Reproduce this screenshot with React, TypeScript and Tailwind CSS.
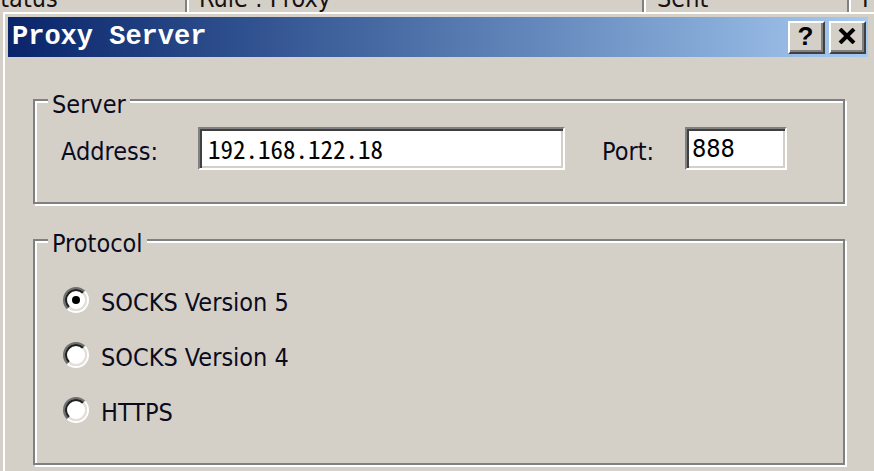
export default function App() {
  const ui = "font-['DejaVu_Sans_Condensed','DejaVu_Sans',sans-serif]";
  const radios = [
    { label: "SOCKS Version 5", checked: true },
    { label: "SOCKS Version 4", checked: false },
    { label: "HTTPS", checked: false },
  ];
  return (
    <div className={`w-[874px] h-[471px] overflow-hidden bg-[#d4d0c8] flex flex-col ${ui} text-[25px] leading-[25px] text-[#0b0b1e]`}>
      {/* background list header (cut off) */}
      <div className="h-[12px] flex shrink-0 overflow-hidden text-[#1a1010]">
        <div className="w-[187px] border-r-2 border-[#808080] overflow-hidden">
          <div className="-mt-[14px] -ml-[14px] whitespace-nowrap">Status</div>
        </div>
        <div className="w-[457px] border-l-2 border-white border-r-2 border-r-[#808080] pl-[10px] overflow-hidden">
          <div className="-mt-[14px] whitespace-nowrap">Rule : Proxy</div>
        </div>
        <div className="w-[205px] border-l-2 border-white border-r-2 border-r-[#808080] pl-[11px] overflow-hidden">
          <div className="-mt-[14px] whitespace-nowrap">Sent</div>
        </div>
        <div className="flex-1 border-l-2 border-white pl-[11px] overflow-hidden">
          <div className="-mt-[14px] whitespace-nowrap">P</div>
        </div>
      </div>

      {/* dialog */}
      <div className="flex-1 ml-[3px] border-t-2 border-l-2 border-white pt-[3px] pl-[3px] flex flex-col">
        <div className="h-[40px] shrink-0 mr-[6px] bg-linear-to-r from-[#0a246a] to-[#a6caf0] flex items-center justify-between pl-[4px] pr-[2px]">
          <span className="font-['Liberation_Mono',monospace] font-bold text-[27px] leading-none text-white">Proxy Server</span>
          <div className="flex gap-[4px]">
            <div className="w-[37px] h-[33px] bg-[#d4d0c8] border-2 border-t-white border-l-white border-b-[#404040] border-r-[#404040] shadow-[inset_-2px_-2px_0_#808080] flex items-center justify-center">
              <span className="font-['Liberation_Sans',sans-serif] font-bold text-[26px] leading-none text-black -mt-[2px] -ml-[2px]">?</span>
            </div>
            <div className="w-[37px] h-[33px] bg-[#d4d0c8] border-2 border-t-white border-l-white border-b-[#404040] border-r-[#404040] shadow-[inset_-2px_-2px_0_#808080] flex items-center justify-center">
              <svg width="18" height="16" viewBox="0 0 18 16" className="-mt-[2px] -ml-[2px]">
                <path d="M2 1 L16 15 M16 1 L2 15" stroke="#000" strokeWidth="4" />
              </svg>
            </div>
          </div>
        </div>

        {/* Server group */}
        <div className="relative mt-[42px] ml-[25px] w-[812px] h-[105px] shrink-0 border-2 border-[#808080] shadow-[inset_2px_2px_0_#fff,2px_2px_0_#fff] pt-[26px] pl-[26px] flex items-start">
          <span className="absolute left-[13px] -top-[9px] px-[4px] bg-[#d4d0c8]">Server</span>
          <span className="w-[137px] mt-[12px]">Address:</span>
          <div className="w-[367px] h-[43px] bg-white border-2 border-t-[#808080] border-l-[#808080] border-b-white border-r-white shadow-[inset_2px_2px_0_#404040,inset_-2px_-2px_0_#d4d0c8] flex items-center pl-[8px]">
            <span className="font-['Noto_Sans_Mono_CJK_SC','Liberation_Mono',monospace] text-[25px] text-black">192.168.122.18</span>
          </div>
          <span className="w-[83px] ml-[37px] mt-[12px]">Port:</span>
          <div className="w-[102px] h-[43px] bg-white border-2 border-t-[#808080] border-l-[#808080] border-b-white border-r-white shadow-[inset_2px_2px_0_#404040,inset_-2px_-2px_0_#d4d0c8] flex items-center pl-[5px]">
            <span className="text-black">888</span>
          </div>
        </div>

        {/* Protocol group */}
        <div className="relative mt-[35px] ml-[25px] w-[812px] h-[226px] shrink-0 border-2 border-[#808080] shadow-[inset_2px_2px_0_#fff,2px_2px_0_#fff] pt-[46px] pl-[28px] flex flex-col gap-[29px]">
          <span className="absolute left-[13px] -top-[10px] px-[4px] bg-[#d4d0c8]">Protocol</span>
          {radios.map((r) => (
            <div key={r.label} className="h-[26px] flex items-center gap-[12px]">
              <div className="w-[26px] h-[26px] shrink-0 rounded-full border-2 border-t-[#707070] border-l-[#707070] border-r-white border-b-white">
                <div className="w-full h-full rounded-full border-2 border-t-[#202020] border-l-[#202020] border-r-[#e4e0d8] border-b-[#e4e0d8] bg-white flex items-center justify-center">
                  {r.checked && <div className="w-[8px] h-[8px] rounded-full bg-black" />}
                </div>
              </div>
              <span className="pt-[4px]">{r.label}</span>
            </div>
          ))}
        </div>
      </div>
    </div>
  );
}
